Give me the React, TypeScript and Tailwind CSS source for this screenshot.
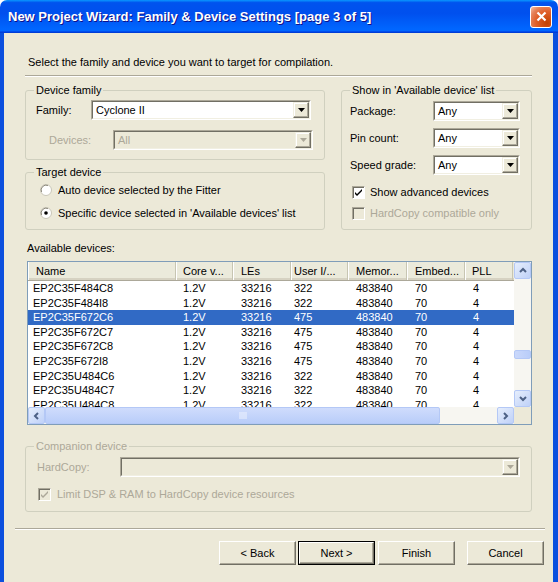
import React from "react"

interface Device {
    name: string
    core: string
    les: string
    io: string
    mem: string
    embed: string
    pll: string
}

const devices: Device[] = [
    { name: "EP2C35F484C8", core: "1.2V", les: "33216", io: "322", mem: "483840", embed: "70", pll: "4" },
    { name: "EP2C35F484I8", core: "1.2V", les: "33216", io: "322", mem: "483840", embed: "70", pll: "4" },
    { name: "EP2C35F672C6", core: "1.2V", les: "33216", io: "475", mem: "483840", embed: "70", pll: "4" },
    { name: "EP2C35F672C7", core: "1.2V", les: "33216", io: "475", mem: "483840", embed: "70", pll: "4" },
    { name: "EP2C35F672C8", core: "1.2V", les: "33216", io: "475", mem: "483840", embed: "70", pll: "4" },
    { name: "EP2C35F672I8", core: "1.2V", les: "33216", io: "475", mem: "483840", embed: "70", pll: "4" },
    { name: "EP2C35U484C6", core: "1.2V", les: "33216", io: "322", mem: "483840", embed: "70", pll: "4" },
    { name: "EP2C35U484C7", core: "1.2V", les: "33216", io: "322", mem: "483840", embed: "70", pll: "4" },
    { name: "EP2C35U484C8", core: "1.2V", les: "33216", io: "322", mem: "483840", embed: "70", pll: "4" },
]

// column widths + left padding of header text and cell text
const columns = [
    { key: "name", label: "Name", w: "w-[148px]", hpl: "pl-[8px]", pl: "pl-[5px]" },
    { key: "core", label: "Core v...", w: "w-[57px]", hpl: "pl-[7px]", pl: "pl-[7px]" },
    { key: "les", label: "LEs", w: "w-[58px]", hpl: "pl-[8px]", pl: "pl-[8px]" },
    { key: "io", label: "User I/...", w: "w-[57px]", hpl: "pl-[3px]", pl: "pl-[3px]" },
    { key: "mem", label: "Memor...", w: "w-[59px]", hpl: "pl-[8px]", pl: "pl-[8px]" },
    { key: "embed", label: "Embed...", w: "w-[58px]", hpl: "pl-[8px]", pl: "pl-[8px]" },
    { key: "pll", label: "PLL", w: "w-[48px]", hpl: "pl-[7px]", pl: "pl-[8px]" },
] as const

const DownArrow = ({ disabled }: { disabled?: boolean }) => (
    <svg width="7" height="4" viewBox="0 0 7 4">
        <path d="M0 0h7L3.5 4z" fill={disabled ? "#aca899" : "#000"} />
    </svg>
)

const Combo = ({ value, disabled, width }: { value?: string; disabled?: boolean; width: string }) => (
    <div className={`flex h-[20px] border border-t-[#aca899] border-l-[#aca899] border-b-white border-r-white ${width}`}>
        <div className={`flex flex-1 border border-t-[#716f64] border-l-[#716f64] border-b-[#f1efe2] border-r-[#f1efe2] ${disabled ? "bg-[#ece9d8]" : "bg-white"}`}>
            <span className={`flex-1 pl-[3px] leading-[16px] ${disabled ? "text-[#aca899]" : "text-black"}`}>{value}</span>
            <div className="flex w-[16px] items-center justify-center bg-[#ece9d8] border border-t-[#f1efe2] border-l-[#f1efe2] border-b-[#716f64] border-r-[#716f64] shadow-[inset_-1px_-1px_0_#aca899,inset_1px_1px_0_#ffffff]">
                <DownArrow disabled={disabled} />
            </div>
        </div>
    </div>
)

const Radio = ({ checked }: { checked?: boolean }) => (
    <svg width="12" height="12" viewBox="0 0 12 12">
        <circle cx="6" cy="6" r="5.5" fill="#ffffff" stroke="#c9c6b8" />
        <path d="M1.5 8A5 5 0 0 1 8 1.5" fill="none" stroke="#8e8b7d" strokeWidth="1" />
        {checked && <circle cx="6" cy="6" r="1.8" fill="#000" />}
    </svg>
)

const Checkbox = ({ checked, disabled }: { checked?: boolean; disabled?: boolean }) => (
    <div className={`flex h-[13px] w-[13px] items-center justify-center border border-t-[#aca899] border-l-[#aca899] border-b-white border-r-white ${disabled ? "bg-[#ece9d8]" : "bg-white"} shadow-[inset_1px_1px_0_#716f64]`}>
        {checked && (
            <svg width="9" height="9" viewBox="0 0 9 9">
                <path d="M1 4l2 2 5-5v2L3 8 1 6z" fill={disabled ? "#aca899" : "#000"} />
            </svg>
        )}
    </div>
)

const Group = ({ title, disabled, className = "", children }: { title: string; disabled?: boolean; className?: string; children: React.ReactNode }) => (
    <fieldset className={`flex flex-col rounded-[3px] border border-[#d0d0bf] px-[8px] ${className}`}>
        <legend className={`px-[2px] leading-[14px] ${disabled ? "text-[#aca899]" : "text-black"}`}>{title}</legend>
        {children}
    </fieldset>
)

const Chevron = ({ dir }: { dir: "up" | "down" | "left" | "right" }) => {
    const d = {
        up: "M1 5l3-3 3 3",
        down: "M1 2l3 3 3-3",
        left: "M5 1L2 4l3 3",
        right: "M2 1l3 3-3 3",
    }[dir]
    return (
        <svg width="8" height="8" viewBox="0 0 8 8">
            <path d={d} fill="none" stroke="#4d6185" strokeWidth="2" />
        </svg>
    )
}

const ScrollButton = ({ dir }: { dir: "up" | "down" | "left" | "right" }) => (
    <div className="flex h-[17px] w-[17px] shrink-0 items-center justify-center rounded-[2px] border border-[#b4c8f6] bg-[linear-gradient(135deg,#e6eefc,#bfd1f8)]">
        <Chevron dir={dir} />
    </div>
)

const Button = ({ label, isDefault, className = "" }: { label: string; isDefault?: boolean; className?: string }) => (
    <div className={`h-[24px] w-[77px] ${isDefault ? "border border-black" : ""} ${className}`}>
        <div className="flex h-full w-full items-center justify-center bg-[#ece9d8] border border-t-white border-l-white border-b-[#716f64] border-r-[#716f64] shadow-[inset_-1px_-1px_0_#aca899]">
            {label}
        </div>
    </div>
)

export default function App() {
    return (
        <div className="flex h-[582px] w-[558px] flex-col bg-white font-['Liberation_Sans',Arial,sans-serif] text-[11px] text-black">
            {/* title bar */}
            <div className="flex h-[33px] shrink-0 items-center rounded-t-[7px] bg-[linear-gradient(180deg,#0997ff,#0053ee_8%,#0050ee_40%,#0066ff_88%,#0066ff_93%,#005bff_95%,#003dd7_96%,#003dd7)] pl-[8px] pr-[6px]">
                <span className="flex-1 text-[13px] font-bold text-white [text-shadow:1px_1px_#0f1089]">
                    New Project Wizard: Family &amp; Device Settings [page 3 of 5]
                </span>
                <div className="flex h-[22px] w-[22px] items-center justify-center rounded-[3px] border border-white bg-[radial-gradient(circle_at_80%_80%,#c24100_0%,#e0602a_50%,#e58259_75%,#f6c1a8_100%)]">
                    <svg width="11" height="11" viewBox="0 0 11 11">
                        <path d="M1.5 1.5l8 8M9.5 1.5l-8 8" stroke="#fff" strokeWidth="2.2" />
                    </svg>
                </div>
            </div>

            {/* body */}
            <div className="flex flex-1 flex-col border-l-[4px] border-r-[5px] border-[#0b4fde] bg-[#ece9d8]">
                <div className="flex flex-col px-[21px]">
                    <p className="mt-[22px] pl-[3px] leading-[14px]">Select the family and device you want to target for compilation.</p>
                    <div className="mt-[6px] border-t border-b border-t-[#aca899] border-b-white" />

                    <div className="mt-[6px] flex gap-[16px]">
                        {/* left column */}
                        <div className="flex w-[300px] flex-col">
                            <Group title="Device family" className="h-[77px]">
                                <div className="mt-[3px] flex items-center">
                                    <span className="w-[57px] pl-[2px]">Family:</span>
                                    <Combo value="Cyclone II" width="w-[220px]" />
                                </div>
                                <div className="mt-[10px] flex items-center">
                                    <span className="ml-[15px] w-[64px] text-[#aca899]">Devices:</span>
                                    <Combo value="All" disabled width="w-[200px]" />
                                </div>
                            </Group>
                            <Group title="Target device" className="mt-[5px] h-[65px]">
                                <div className="mt-[3px] flex h-[16px] items-center gap-[6px] pl-[6px]">
                                    <Radio />
                                    <span>Auto device selected by the Fitter</span>
                                </div>
                                <div className="mt-[7px] flex h-[16px] items-center gap-[6px] pl-[6px]">
                                    <Radio checked />
                                    <span>Specific device selected in 'Available devices' list</span>
                                </div>
                            </Group>
                        </div>

                        {/* right column */}
                        <Group title="Show in 'Available device' list" className="h-[147px] flex-1">
                            {["Package:", "Pin count:", "Speed grade:"].map((label, i) => (
                                <div key={label} className={`flex items-center ${i === 0 ? "mt-[4px]" : "mt-[7px]"}`}>
                                    <span className="w-[83px]">{label}</span>
                                    <Combo value="Any" width="w-[87px]" />
                                </div>
                            ))}
                            <div className="mt-[9px] flex h-[16px] items-center gap-[5px] pl-[2px]">
                                <Checkbox checked />
                                <span>Show advanced devices</span>
                            </div>
                            <div className="mt-[5px] flex h-[16px] items-center gap-[5px] pl-[2px]">
                                <Checkbox disabled />
                                <span className="text-[#aca899]">HardCopy compatible only</span>
                            </div>
                        </Group>
                    </div>

                    <p className="mt-[11px] pl-[2px] leading-[14px]">Available devices:</p>

                    {/* device list */}
                    <div className="ml-[2px] mt-[6px] flex h-[164px] w-[505px] flex-col border border-[#7f9db9] bg-white">
                        <div className="flex min-h-0 flex-1">
                            <div className="flex flex-1 flex-col overflow-hidden">
                                <div className="flex h-[19px] shrink-0 bg-[#ebeadb] border-b border-b-[#aca899] shadow-[inset_0_-2px_0_#d6d2c2]">
                                    {columns.map((c) => (
                                        <div key={c.key} className={`${c.w} ${c.hpl} shrink-0 leading-[18px] border-r border-r-[#c7c5b2] shadow-[inset_1px_0_0_#ffffff]`}>
                                            {c.label}
                                        </div>
                                    ))}
                                </div>
                                {devices.map((d, i) => (
                                    <div key={d.name} className={`flex h-[14.6px] shrink-0 ${i === 2 ? "bg-[#316ac5] text-white" : ""}`}>
                                        {columns.map((c) => (
                                            <div key={c.key} className={`${c.w} ${c.pl} shrink-0 leading-[14.6px]`}>
                                                {d[c.key]}
                                            </div>
                                        ))}
                                    </div>
                                ))}
                            </div>
                            {/* vertical scrollbar */}
                            <div className="flex w-[17px] shrink-0 flex-col bg-[#f7f6f1]">
                                <ScrollButton dir="up" />
                                <div className="h-[71px]" />
                                <div className="h-[9px] rounded-[2px] border border-[#b4c8f6] bg-[linear-gradient(90deg,#cad8fb,#b9cdf9)]" />
                                <div className="flex-1" />
                                <ScrollButton dir="down" />
                            </div>
                        </div>
                        {/* horizontal scrollbar */}
                        <div className="flex h-[17px] shrink-0 bg-[#f7f6f1]">
                            <ScrollButton dir="left" />
                            <div className="flex w-[395px] items-center justify-center rounded-[2px] border border-[#b4c8f6] bg-[linear-gradient(180deg,#cfdcfc,#b9cdf9)]">
                                <svg width="8" height="7" viewBox="0 0 8 7">
                                    <path d="M1 0v7M3 0v7M5 0v7M7 0v7" stroke="#eef3fe" strokeWidth="1" />
                                </svg>
                            </div>
                            <div className="flex-1" />
                            <ScrollButton dir="right" />
                            <div className="w-[17px] bg-[#ece9d8]" />
                        </div>
                    </div>

                    {/* companion device */}
                    <Group title="Companion device" disabled className="mt-[14px] h-[73px]">
                        <div className="mt-[4px] flex items-center">
                            <span className="ml-[3px] w-[83px] text-[#aca899]">HardCopy:</span>
                            <Combo disabled width="w-[400px]" />
                        </div>
                        <div className="mt-[9px] flex h-[16px] items-center gap-[6px] pl-[4px]">
                            <Checkbox checked disabled />
                            <span className="text-[#aca899]">Limit DSP &amp; RAM to HardCopy device resources</span>
                        </div>
                    </Group>
                </div>

                <div className="ml-[11px] mr-[8px] mt-[16px] border-t border-b border-t-[#aca899] border-b-white" />

                <div className="mt-[11px] flex justify-end pr-[9px]">
                    <Button label="< Back" />
                    <Button label="Next >" isDefault className="ml-[2px]" />
                    <Button label="Finish" className="ml-[3px]" />
                    <Button label="Cancel" className="ml-[12px]" />
                </div>
            </div>
        </div>
    )
}
